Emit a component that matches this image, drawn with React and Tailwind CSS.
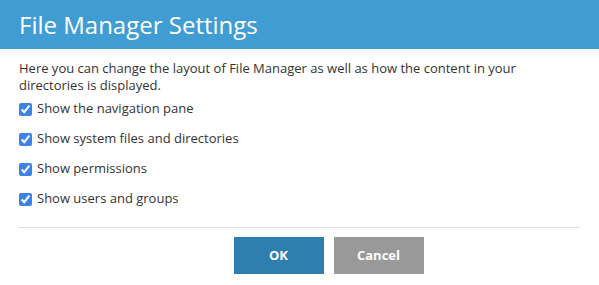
import React, { useState } from 'react';

const options = [
  'Show the navigation pane',
  'Show system files and directories',
  'Show permissions',
  'Show users and groups',
];

const App = () => {
  const [checked, setChecked] = useState(options.map(() => true));

  const toggle = (i) => {
    setChecked((prev) => prev.map((v, j) => (j === i ? !v : v)));
  };

  return (
    <div className="w-[599px] h-[285px] bg-white font-['Open_Sans',sans-serif] text-[#333]">
      <div className="h-[49px] bg-[#3f9dd3] flex items-center px-[19px]">
        <h1 className="text-white text-[24px] leading-none">File Manager Settings</h1>
      </div>
      <div className="px-[19px]">
        <p className="mt-[11px] text-[13px] leading-[17px]">
          Here you can change the layout of File Manager as well as how the content in your directories is displayed.
        </p>
        <div>
          {options.map((label, i) => (
            <label key={label} className="h-[30px] flex items-center gap-[5px] text-[13px]">
              <input
                type="checkbox"
                checked={checked[i]}
                onChange={() => toggle(i)}
                className="m-0 w-[13px] h-[13px] accent-[#3b83e8]"
              />
              <span>{label}</span>
            </label>
          ))}
        </div>
        <div className="mt-[13px] border-t border-[#dddddd]" />
        <div className="mt-[9px] flex justify-center gap-[10px] pl-[58px]">
          <button className="w-[90px] h-[37px] bg-[#2e7eb0] text-white text-[13px] font-bold">OK</button>
          <button className="w-[90px] h-[37px] bg-[#999999] text-white text-[13px] font-bold">Cancel</button>
        </div>
      </div>
    </div>
  );
};

export default App;
